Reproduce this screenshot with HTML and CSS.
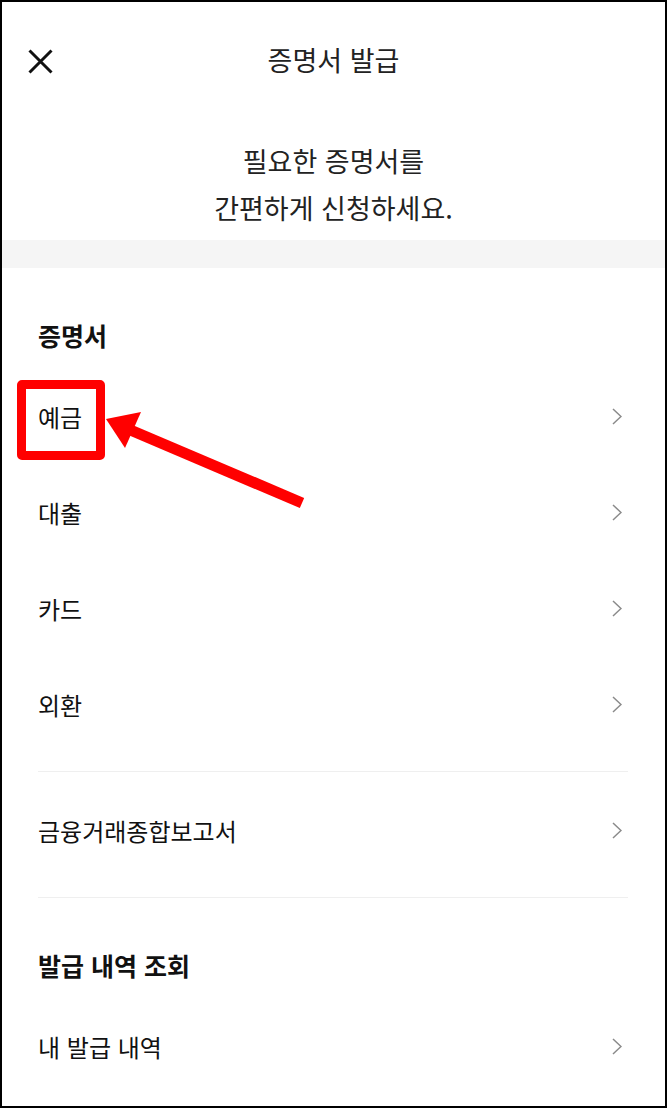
FILE: index.html
```html
<!DOCTYPE html>
<html lang="ko">
<head>
<meta charset="utf-8">
<title>증명서 발급</title>
<link rel="stylesheet" href="styles.css">
</head>
<body>
<div class="frame">
  <header class="topbar">
    <span class="close">
      <svg width="25" height="25" viewBox="0 0 25 25"><path d="M1.5 1.5 L23.5 23.5 M23.5 1.5 L1.5 23.5" stroke="#111" stroke-width="3" fill="none"/></svg>
    </span>
    <h1 class="title">증명서 발급</h1>
    <span></span>
  </header>
  <p class="intro">필요한 증명서를<br>간편하게 신청하세요.</p>
  <div class="band"></div>

  <section class="group group-first">
    <h2 class="heading">증명서</h2>
    <div class="row"><span>예금</span><svg class="chev" width="10" height="17" viewBox="0 0 10 17"><path d="M1 1 L9 8.5 L1 16" stroke="#8a8a8a" stroke-width="1.5" fill="none"/></svg></div>
    <div class="row"><span>대출</span><svg class="chev" width="10" height="17" viewBox="0 0 10 17"><path d="M1 1 L9 8.5 L1 16" stroke="#8a8a8a" stroke-width="1.5" fill="none"/></svg></div>
    <div class="row"><span>카드</span><svg class="chev" width="10" height="17" viewBox="0 0 10 17"><path d="M1 1 L9 8.5 L1 16" stroke="#8a8a8a" stroke-width="1.5" fill="none"/></svg></div>
    <div class="row"><span>외환</span><svg class="chev" width="10" height="17" viewBox="0 0 10 17"><path d="M1 1 L9 8.5 L1 16" stroke="#8a8a8a" stroke-width="1.5" fill="none"/></svg></div>
  </section>
  <div class="divider"></div>
  <section class="group group-mid">
    <div class="row"><span>금융거래종합보고서</span><svg class="chev" width="10" height="17" viewBox="0 0 10 17"><path d="M1 1 L9 8.5 L1 16" stroke="#8a8a8a" stroke-width="1.5" fill="none"/></svg></div>
  </section>
  <div class="divider"></div>
  <section class="group group-last">
    <h2 class="heading">발급 내역 조회</h2>
    <div class="row"><span>내 발급 내역</span><svg class="chev" width="10" height="17" viewBox="0 0 10 17"><path d="M1 1 L9 8.5 L1 16" stroke="#8a8a8a" stroke-width="1.5" fill="none"/></svg></div>
  </section>

  <div class="mark-box"></div>
  <svg class="mark-arrow" width="667" height="1108" viewBox="0 0 667 1108">
    <line x1="128" y1="429" x2="302" y2="503" stroke="#ff0000" stroke-width="11"/>
    <polygon points="106,419 141,412 125,448" fill="#ff0000"/>
  </svg>
</div>
</body>
</html>
```

FILE: styles.css
```css
* { box-sizing: border-box; }
html, body { margin: 0; padding: 0; background: #fff; }
body {
  font-family: "Noto Sans CJK KR", "Noto Sans", sans-serif;
  color: #111;
}
.frame {
  position: relative;
  width: 667px;
  height: 1108px;
  border: 2px solid #000;
  overflow: hidden;
}
.topbar {
  height: 120px;
  display: grid;
  grid-template-columns: 1fr auto 1fr;
  align-items: center;
  padding: 0 26px 4px;
}
.close { display: flex; align-items: center; padding-top: 2px; }
.title {
  margin: 0;
  font-size: 27px;
  font-weight: 400;
  color: #222;
  line-height: 34px;
}
.intro {
  margin: 0;
  padding: 15px 0 9px;
  text-align: center;
  font-size: 27px;
  line-height: 47px;
  color: #222;
}
.band { height: 28px; background: #f5f5f5; }
.group { padding: 0 36px 17px; }
.group-first, .group-last { padding-top: 50px; }
.group-mid { padding-top: 12px; }
.heading {
  margin: 0 0 18px;
  font-size: 25px;
  font-weight: 700;
  line-height: 34px;
  color: #111;
}
.row {
  height: 96px;
  display: flex;
  align-items: center;
  justify-content: space-between;
  font-size: 24px;
  color: #111;
  padding: 0 7px 3px 0;
}
.chev { display: block; }
.divider {
  height: 1px;
  margin: 0 37px 0 36px;
  background: #efefef;
}
.mark-box {
  position: absolute;
  left: 15px;
  top: 378px;
  width: 88px;
  height: 80px;
  border: 9px solid #ff0000;
  border-radius: 5px;
}
.mark-arrow {
  position: absolute;
  left: -2px;
  top: -2px;
  pointer-events: none;
}
```
